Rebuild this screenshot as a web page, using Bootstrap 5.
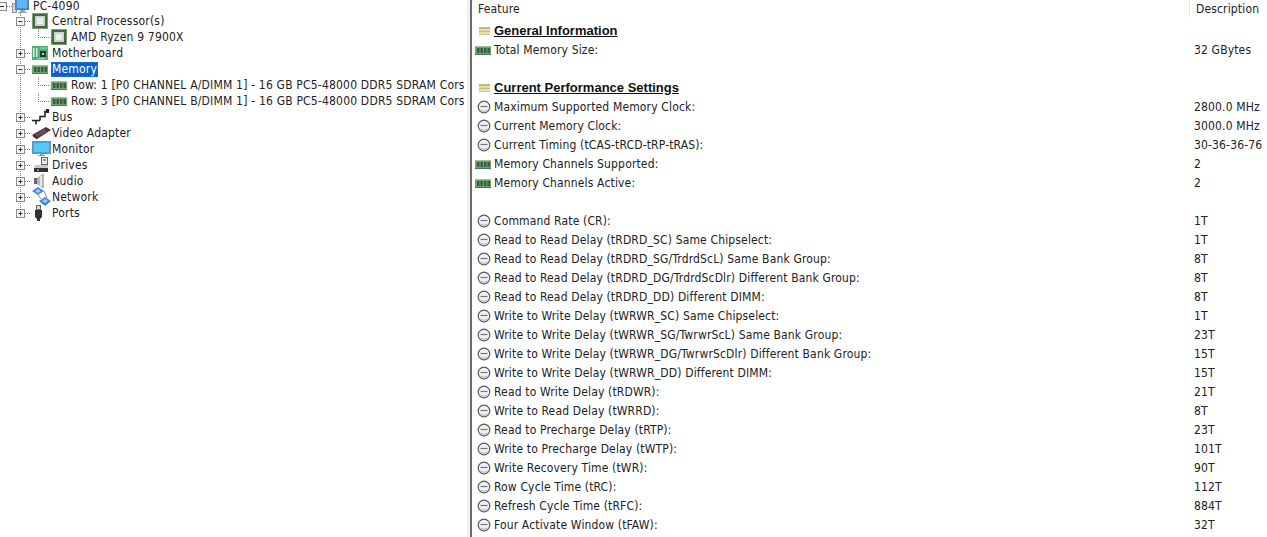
<!DOCTYPE html>
<html lang="en"><head><meta charset="utf-8"><title>PC-4090 Memory</title>
<link href="https://cdn.jsdelivr.net/npm/bootstrap@5.3.0/dist/css/bootstrap.min.css" rel="stylesheet">
<style>
html,body{height:537px;overflow:hidden;background:#fff}
body{font-family:"DejaVu Sans Condensed","DejaVu Sans",sans-serif;font-stretch:condensed;font-size:12px;color:#222;line-height:16px}
.shell{height:537px;overflow:hidden}
.treepane{width:467px;flex:none;overflow:hidden;letter-spacing:.19px}
.trow{height:16px;white-space:nowrap}
.trow svg{flex:none;display:block}
.rootrow{height:13px;align-items:flex-start}
.rootrow svg{margin-top:-2px}
.rootrow span:last-child{line-height:12px}
.sel{background:#0a62c4;color:#fff;outline:1px dotted #7a6a30;outline-offset:-1px;padding:0 1px;margin-left:-1px;height:15px;line-height:15px}
.tgap{width:4px;flex:none}
.netic{margin:-2px 0}
.splitter{width:5px;flex:none;background:#f0f0f0;border-right:2px solid #6d6d6d}
.detail{flex:1 1 auto;min-width:0;overflow:hidden;letter-spacing:.15px}
.dhead{height:21px;line-height:18px}
.dhead .hf{width:717px;padding-left:6px;flex:none}
.dhead .hd{padding-left:6px;border-left:1px solid #e8e8e8;height:18px}
.drow{height:19px;line-height:21px;white-space:nowrap}
.drow .fcol{width:722px;flex:none}
.drow .ico{width:22px;height:19px;flex:none;padding-left:5px}
.drow .ico svg{display:block}
.ramic{margin-left:-2px}
.grp{font-family:"Liberation Sans",sans-serif;font-stretch:normal;font-weight:700;text-decoration:underline;color:#111;font-size:13px;line-height:19px;letter-spacing:0}
</style></head><body>
<svg width="0" height="0" class="d-none" aria-hidden="true"><defs>
<symbol id="g-plus" viewBox="0 0 32 16"><path d="M20.500 0v16" stroke="#888" stroke-dasharray="1 1"/><path d="M25 8.500h6" stroke="#888" stroke-dasharray="1 1"/><rect x="16.500" y="4.500" width="8" height="8" fill="#f4f4f4" stroke="#8a8a8a"/><path d="M18.500 8.500h4M20.500 6.500v4" stroke="#333"/></symbol>
<symbol id="g-plus-end" viewBox="0 0 32 16"><path d="M20.500 0v8" stroke="#888" stroke-dasharray="1 1"/><path d="M25 8.500h6" stroke="#888" stroke-dasharray="1 1"/><rect x="16.500" y="4.500" width="8" height="8" fill="#f4f4f4" stroke="#8a8a8a"/><path d="M18.500 8.500h4M20.500 6.500v4" stroke="#333"/></symbol>
<symbol id="g-minus" viewBox="0 0 32 16"><path d="M20.500 0v16" stroke="#888" stroke-dasharray="1 1"/><path d="M25 8.500h6" stroke="#888" stroke-dasharray="1 1"/><rect x="16.500" y="4.500" width="8" height="8" fill="#f4f4f4" stroke="#8a8a8a"/><path d="M18.500 8.500h4" stroke="#333"/></symbol>
<symbol id="g-leaf" viewBox="0 0 51 16"><path d="M20.500 0v16" stroke="#888" stroke-dasharray="1 1"/><path d="M38.500 0v8.500h12" fill="none" stroke="#888" stroke-dasharray="1 1"/></symbol>
<symbol id="g-root" viewBox="0 0 12 16"><path d="M7 8.500h5" stroke="#888" stroke-dasharray="1 1"/><rect x="-1.500" y="4.500" width="8" height="8" fill="#f4f4f4" stroke="#8a8a8a"/><path d="M0 8.500h4" stroke="#333"/></symbol>
<symbol id="i-pc" viewBox="0 0 17 16"><rect x="0.500" y="5.500" width="4" height="9" fill="#d4d4d4" stroke="#9a9a9a"/><rect x="3.500" y="0.500" width="13" height="11" fill="#3f8fe0" stroke="#5f7fa5"/><rect x="5" y="2" width="10" height="8" fill="#63b6f5"/><path d="M8 12h5v2h2v1H6v-1h2z" fill="#9aa3ac"/></symbol>
<symbol id="i-cpu" viewBox="0 0 16 16"><rect x="0.500" y="0.500" width="15" height="15" fill="#3f6a3c" stroke="#7d9a72"/><rect x="3" y="3" width="10" height="10" fill="#cfd3ce"/><rect x="5" y="5" width="6" height="6" fill="#eceeeb"/></symbol>
<symbol id="i-mb" viewBox="0 0 16 16"><rect x="0" y="1" width="16" height="14" fill="#52ad7a"/><rect x="1" y="3" width="1.500" height="9" fill="#d7efdf"/><rect x="4" y="3" width="1.500" height="9" fill="#cfe8d7"/><rect x="8" y="6" width="6" height="6" fill="#1f3d2d"/><rect x="10" y="8" width="2" height="2" fill="#bcd"/><path d="M7 3h8M6 13.500h7" stroke="#a5dcb9"/></symbol>
<symbol id="i-ram" viewBox="0 0 16 16"><rect x="0" y="4" width="16" height="9" fill="#6fa46e"/><path d="M0 12.500h16" stroke="#3f7a55"/><path d="M2 6h2.500v5H2zM5.500 6H8v5H5.500zM9 6h2.500v5H9zM12.500 6H15v5h-2.500z" fill="#3b5f46"/><path d="M0 4.500h16" stroke="#9cc498"/></symbol>
<symbol id="i-bus" viewBox="0 0 20 16"><path d="M0 11.500h8M4 11.500v4M8 11.500V7.500h5V2.500h3" fill="none" stroke="#1d1d1d" stroke-width="1.500"/><rect x="14" y="0" width="3" height="4" fill="#222"/></symbol>
<symbol id="i-vid" viewBox="0 0 20 16"><path d="M0 10 14 2l5 3L5 14z" fill="#4b3236"/><path d="M3 10l9-6 3 2-9 6z" fill="#6f4a50"/><path d="M1 11l4 3" stroke="#222"/></symbol>
<symbol id="i-mon" viewBox="0 0 20 16"><rect x="0.500" y="0.500" width="18" height="12" fill="#31a7ea" stroke="#6d96ad"/><rect x="2" y="2" width="15" height="9" fill="#5ac6f3"/><path d="M8 13h3v1h2v1H6v-1h2z" fill="#8f9aa3"/></symbol>
<symbol id="i-drv" viewBox="0 0 20 16"><rect x="9.500" y="0.500" width="6" height="7" fill="#eee" stroke="#666"/><rect x="11" y="2" width="3" height="2" fill="#999"/><path d="M3 8h13v3H2z" fill="#c9c9c9"/><rect x="2" y="11" width="14" height="4" fill="#333"/><path d="M5 13h2" stroke="#ddd"/></symbol>
<symbol id="i-aud" viewBox="0 0 20 16"><rect x="2" y="5" width="3" height="6" fill="#666"/><path d="M5 5l7-5v16l-7-5z" fill="#b5b5b5"/><path d="M9 3v10" stroke="#e4e4e4" stroke-width="2"/></symbol>
<symbol id="i-net" viewBox="0 0 20 20"><path d="M0 4l6-4 6 4-6 4z" fill="#3e87e0"/><path d="M7 14l6-4 6 4-6 5z" fill="#3e87e0"/><path d="M6 8l3 4M12 4l3 7" stroke="#8a8a8a" fill="none"/><path d="M3 4l3-2 3 2-3 2zM10 14l3-2 3 2-3 2z" fill="#9ed0f7"/></symbol>
<symbol id="i-port" viewBox="0 0 20 16"><rect x="4.500" y="0.500" width="4" height="4" fill="#ddd" stroke="#666"/><path d="M3 5h7v7l-2 2v2H5v-2l-2-2z" fill="#333"/></symbol>
<symbol id="i-sec" viewBox="0 0 14 14"><path d="M2 3h11v2H2z" fill="#c9b774"/><path d="M2 5h11v1.500H2z" fill="#e8dfae"/><path d="M2 6.500h11V8H2z" fill="#cdbb79"/><path d="M2 8h11v1.500H2z" fill="#e8dfae"/><path d="M2 9.500h11V11H2z" fill="#d6c98c"/></symbol>
<symbol id="i-clk" viewBox="0 0 14 14"><circle cx="7" cy="7" r="5.800" fill="#f0f0f0" stroke="#5a5a5a" stroke-width="1.200"/><path d="M3.500 6.500h7" stroke="#777" stroke-width="1.200"/><path d="M3.500 10c2 1.500 5 1.500 7 0" stroke="#b5b5b5" fill="none"/></symbol>
</defs></svg>

<div class="shell d-flex">
  <div class="treepane">
    <div>
      <div class="trow rootrow d-flex"><svg width="12" height="16"><use href="#g-root"/></svg><svg width="17" height="16"><use href="#i-pc"/></svg><span class="tgap"></span><span>PC-4090</span></div>
      <div class="trow d-flex align-items-center"><svg width="32" height="16"><use href="#g-minus"/></svg><svg width="16" height="16"><use href="#i-cpu"/></svg><span class="tgap"></span><span>Central Processor(s)</span></div>
      <div class="trow d-flex align-items-center"><svg width="51" height="16"><use href="#g-leaf"/></svg><svg width="16" height="16"><use href="#i-cpu"/></svg><span class="tgap"></span><span>AMD Ryzen 9 7900X</span></div>
      <div class="trow d-flex align-items-center"><svg width="32" height="16"><use href="#g-plus"/></svg><svg width="16" height="16"><use href="#i-mb"/></svg><span class="tgap"></span><span>Motherboard</span></div>
      <div class="trow d-flex align-items-center"><svg width="32" height="16"><use href="#g-minus"/></svg><svg width="16" height="16"><use href="#i-ram"/></svg><span class="tgap"></span><span class="sel">Memory</span></div>
      <div class="trow d-flex align-items-center"><svg width="51" height="16"><use href="#g-leaf"/></svg><svg width="16" height="16"><use href="#i-ram"/></svg><span class="tgap"></span><span>Row: 1 [P0 CHANNEL A/DIMM 1] - 16 GB PC5-48000 DDR5 SDRAM Cors</span></div>
      <div class="trow d-flex align-items-center"><svg width="51" height="16"><use href="#g-leaf"/></svg><svg width="16" height="16"><use href="#i-ram"/></svg><span class="tgap"></span><span>Row: 3 [P0 CHANNEL B/DIMM 1] - 16 GB PC5-48000 DDR5 SDRAM Cors</span></div>
      <div class="trow d-flex align-items-center"><svg width="32" height="16"><use href="#g-plus"/></svg><svg width="20" height="16"><use href="#i-bus"/></svg><span>Bus</span></div>
      <div class="trow d-flex align-items-center"><svg width="32" height="16"><use href="#g-plus"/></svg><svg width="20" height="16"><use href="#i-vid"/></svg><span>Video Adapter</span></div>
      <div class="trow d-flex align-items-center"><svg width="32" height="16"><use href="#g-plus"/></svg><svg width="20" height="16"><use href="#i-mon"/></svg><span>Monitor</span></div>
      <div class="trow d-flex align-items-center"><svg width="32" height="16"><use href="#g-plus"/></svg><svg width="20" height="16"><use href="#i-drv"/></svg><span>Drives</span></div>
      <div class="trow d-flex align-items-center"><svg width="32" height="16"><use href="#g-plus"/></svg><svg width="20" height="16"><use href="#i-aud"/></svg><span>Audio</span></div>
      <div class="trow d-flex align-items-center"><svg width="32" height="16"><use href="#g-plus"/></svg><svg class="netic" width="20" height="20"><use href="#i-net"/></svg><span>Network</span></div>
      <div class="trow d-flex align-items-center"><svg width="32" height="16"><use href="#g-plus-end"/></svg><svg width="20" height="16"><use href="#i-port"/></svg><span>Ports</span></div>
    </div>
  </div>
  <div class="splitter"></div>
  <div class="detail">
    <div class="dhead d-flex"><div class="hf">Feature</div><div class="hd">Description</div></div>
    <div class="drow d-flex"><div class="fcol d-flex"><span class="ico d-flex align-items-center"><svg width="14" height="14"><use href="#i-sec"/></svg></span><span class="grp">General Information</span></div></div>
    <div class="drow d-flex"><div class="fcol d-flex"><span class="ico d-flex align-items-center"><svg class="ramic" width="16" height="16"><use href="#i-ram"/></svg></span><span>Total Memory Size:</span></div><div>32 GBytes</div></div>
    <div class="drow"></div>
    <div class="drow d-flex"><div class="fcol d-flex"><span class="ico d-flex align-items-center"><svg width="14" height="14"><use href="#i-sec"/></svg></span><span class="grp">Current Performance Settings</span></div></div>
    <div id="rows"></div>
  </div>
</div>
<script>
const data=[["c","Maximum Supported Memory Clock:","2800.0 MHz"],["c","Current Memory Clock:","3000.0 MHz"],["c","Current Timing (tCAS-tRCD-tRP-tRAS):","30-36-36-76"],["r","Memory Channels Supported:","2"],["r","Memory Channels Active:","2"],null,["c","Command Rate (CR):","1T"],["c","Read to Read Delay (tRDRD_SC) Same Chipselect:","1T"],["c","Read to Read Delay (tRDRD_SG/TrdrdScL) Same Bank Group:","8T"],["c","Read to Read Delay (tRDRD_DG/TrdrdScDlr) Different Bank Group:","8T"],["c","Read to Read Delay (tRDRD_DD) Different DIMM:","8T"],["c","Write to Write Delay (tWRWR_SC) Same Chipselect:","1T"],["c","Write to Write Delay (tWRWR_SG/TwrwrScL) Same Bank Group:","23T"],["c","Write to Write Delay (tWRWR_DG/TwrwrScDlr) Different Bank Group:","15T"],["c","Write to Write Delay (tWRWR_DD) Different DIMM:","15T"],["c","Read to Write Delay (tRDWR):","21T"],["c","Write to Read Delay (tWRRD):","8T"],["c","Read to Precharge Delay (tRTP):","23T"],["c","Write to Precharge Delay (tWTP):","101T"],["c","Write Recovery Time (tWR):","90T"],["c","Row Cycle Time (tRC):","112T"],["c","Refresh Cycle Time (tRFC):","884T"],["c","Four Activate Window (tFAW):","32T"]];
document.getElementById('rows').innerHTML=data.map(d=>{
 if(!d)return '<div class="drow"></div>';
 const ic=d[0]=='c'?'<svg width="14" height="14"><use href="#i-clk"/></svg>':'<svg class="ramic" width="16" height="16"><use href="#i-ram"/></svg>';
 return `<div class="drow d-flex"><div class="fcol d-flex"><span class="ico d-flex align-items-center">${ic}</span><span>${d[1]}</span></div><div>${d[2]}</div></div>`;
}).join('');
</script>
<script src="https://cdn.jsdelivr.net/npm/bootstrap@5.3.0/dist/js/bootstrap.bundle.min.js"></script>
</body></html>
